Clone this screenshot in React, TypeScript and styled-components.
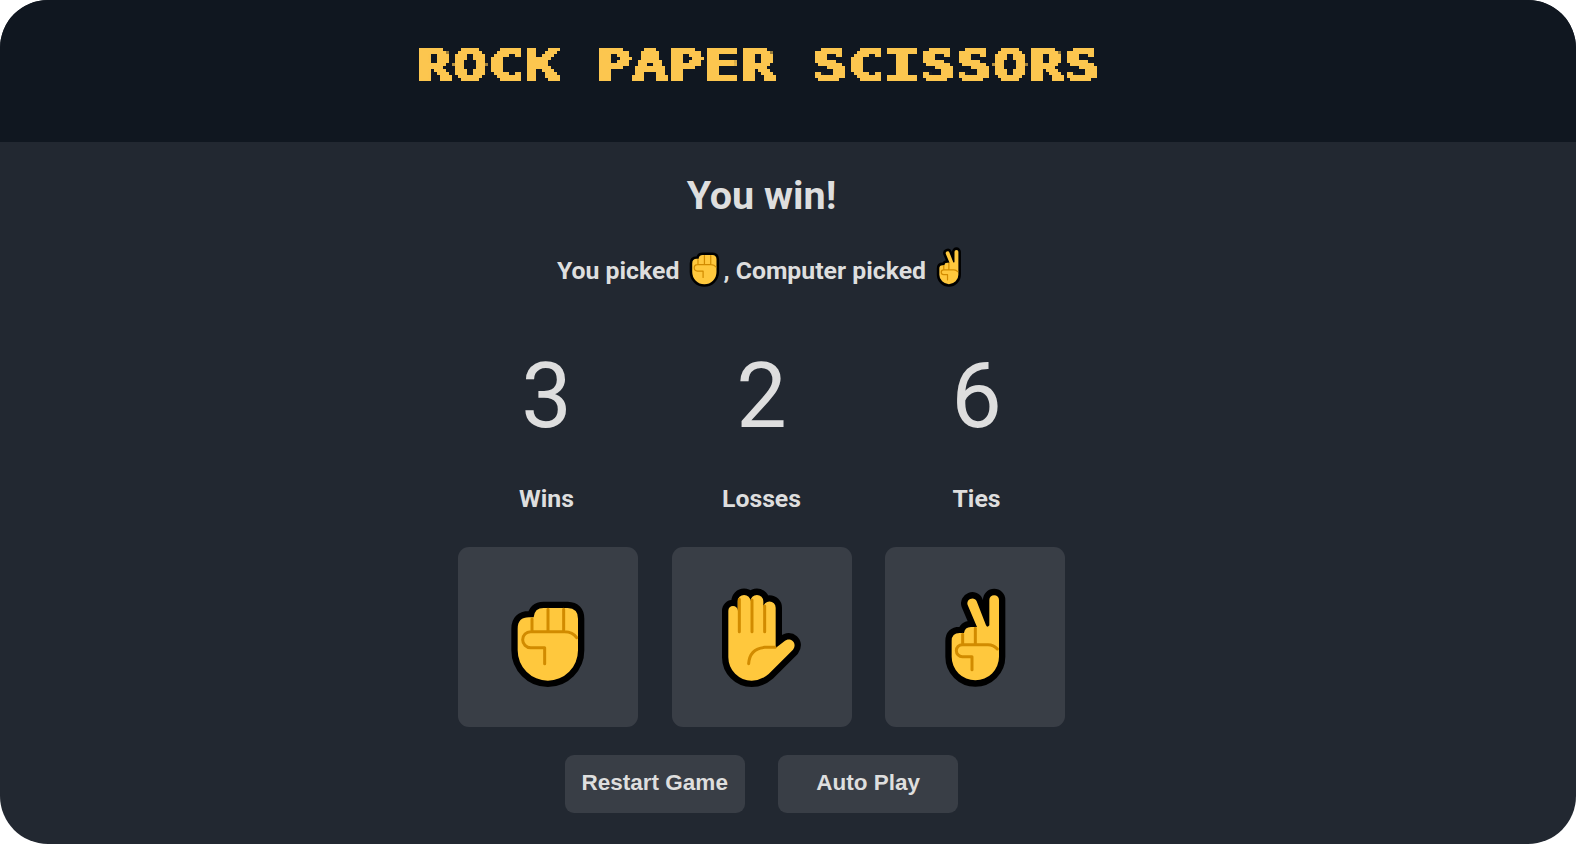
import React, { useState } from "react";
import styled, { createGlobalStyle } from "styled-components";

const GlobalStyle = createGlobalStyle`
  *, *::before, *::after { box-sizing: border-box; }
  body {
    margin: 0;
    background: #fff;
    color: #dedede;
    font-family: Roboto, "Liberation Sans", sans-serif;
  }
`;

const Page = styled.div`
  height: 844px;
  overflow: hidden;
  border-radius: 48px;
  background: #222831;
  display: flex;
  flex-direction: column;
`;

const Header = styled.header`
  height: 142px;
  padding: 33px 60px 0 0;
  background: #101720;
  display: flex;
  justify-content: center;
  align-items: flex-start;
`;

const PixelArea = styled.div`
  width: 720px;
  height: 64px;
  display: flex;
  justify-content: center;
  filter: url(#pixelate);
`;

const Title = styled.h1`
  margin: 0;
  color: #fcc64f;
  font: bold 43px/64px "DejaVu Sans Mono", "Liberation Mono", monospace;
  white-space: pre;
  -webkit-text-stroke: 1.7px #fcc64f;
  transform: scaleX(1.3906);
`;

const FilterDefs = styled.svg`
  position: absolute;
`;

const Main = styled.main`
  padding-right: 53px;
  display: flex;
  flex-direction: column;
  align-items: center;
`;

const Result = styled.h2`
  margin: 30px 0 0;
  font-size: 39.5px;
  line-height: 48px;
`;

const Picks = styled.div`
  margin: 27px 4px 0 0;
  height: 48px;
  font-size: 24.8px;
  line-height: 48px;
  font-weight: 700;
  display: flex;
  white-space: pre;
`;

const Scores = styled.section`
  margin-top: 42px;
  display: flex;
`;

const Score = styled.div`
  width: 215px;
  display: flex;
  flex-direction: column;
  align-items: center;
`;

const Count = styled.div`
  font-size: 90px;
  line-height: 120px;
`;

const Label = styled.div`
  margin-top: 24px;
  font-size: 24.8px;
  line-height: 36px;
  font-weight: 700;
`;

const ButtonRow = styled.div<{ $top: number }>`
  margin-top: ${(p) => p.$top}px;
  display: flex;
  gap: 33.5px;
`;

const BaseButton = styled.button`
  width: 180px;
  padding: 0;
  border: 0;
  background: #393e46;
  color: #dedede;
  cursor: pointer;
`;

const MoveButton = styled(BaseButton)`
  height: 180px;
  border-radius: 11px;
`;

const ActionButton = styled(BaseButton)`
  height: 58px;
  border-radius: 9px;
  padding-bottom: 2px;
  font: bold 22.5px "Liberation Sans", Arial, sans-serif;
`;

const HandSvg = styled.svg`
  display: block;
`;

const InlineHand = styled(HandSvg)<{ $left: number; $right: number }>`
  margin: -2px ${(p) => p.$right}px 0 ${(p) => p.$left}px;
`;

type Move = "rock" | "paper" | "scissors";

const hands: Record<Move, { body: string; lines: string; label: string }> = {
  rock: {
    label: "Rock",
    body: "M203 266Q203 232 237 232H251Q253 204 281 204H353Q384 205 384 236V331A90.5 91 0 0 1 203 331Z",
    lines: "M246 237V272M294 208V272M341 208V272M380 293Q368 275 344 275H242a24 24 0 0 0 0 48H284V371",
  },
  paper: {
    label: "Paper",
    body: "M193 212a14 14 0 0 1 28 0V184a19 19 0 0 1 38.500 0a19 19 0 0 1 38.500 0V203a18.500 18.500 0 0 1 37 0V324L361 304C378 288 402 308 387 329L314 402Q291 422 263 422A70 70 0 0 1 193 352Z",
    lines: "M226 178V275M264 180V275M302 198V275M254 371Q257 326 302 322H333",
  },
  scissors: {
    label: "Scissors",
    body: "M221 303Q221 279 245 279H258Q260 261 279 261H297L269 195C263 177 289 167 296 184L324 256Q328 264 334 256V180a14.500 14.500 0 0 1 29 0V350A71 71 0 0 1 221 350Z",
    lines: "M254 283V311M292 265V311M358 327Q347 314 330 314H253a18 18 0 0 0 0 36H282V389",
  },
};

function HandShape({ move }: { move: Move }) {
  const { body, lines } = hands[move];
  return (
    <g strokeLinejoin="round" strokeLinecap="round">
      <path d={body} fill="#000" stroke="#000" strokeWidth="38" />
      <path d={body} fill="#ffc83d" />
      <path d={lines} fill="none" stroke="#d18b00" strokeWidth="9" />
    </g>
  );
}

const boxes: Record<Move, string> = {
  rock: "24 21 540 540",
  paper: "24 21 540 540",
  scissors: "21 21 540 540",
};

export default function App() {
  const [picks] = useState<{ player: Move; computer: Move }>({ player: "rock", computer: "scissors" });
  const scores = [
    { label: "Wins", count: 3 },
    { label: "Losses", count: 2 },
    { label: "Ties", count: 6 },
  ];
  return (
    <>
      <GlobalStyle />
      {/* Samples one pixel per 3px cell and spreads it over the cell */}
      <FilterDefs width="0" height="0" aria-hidden="true">
        <filter id="pixelate" filterUnits="userSpaceOnUse" x="0" y="0" width="1576" height="142" colorInterpolationFilters="sRGB">
          <feFlood x="1" y="1" width="1" height="1" floodColor="#000" result="dot" />
          <feOffset in="dot" x="0" y="0" width="3" height="3" result="cell" />
          <feTile in="cell" x="0" y="0" width="1576" height="142" result="grid" />
          <feComponentTransfer in="SourceGraphic" result="hard">
            <feFuncA type="linear" slope="12" intercept="-5.5" />
          </feComponentTransfer>
          <feComposite in="hard" in2="grid" operator="in" />
          <feMorphology operator="dilate" radius="1" />
        </filter>
      </FilterDefs>
      <Page>
        <Header>
          <PixelArea>
            <Title>ROCK PAPER SCISSORS</Title>
          </PixelArea>
        </Header>
        <Main>
          <Result>You win!</Result>
          <Picks>
            <span>You picked</span>
            <InlineHand $left={10} $right={3} width="31" height="42" viewBox="179 129 231 313">
              <HandShape move={picks.player} />
            </InlineHand>
            <span>, Computer picked</span>
            <InlineHand $left={10} $right={0} width="26" height="42" viewBox="196 129 194 313">
              <HandShape move={picks.computer} />
            </InlineHand>
          </Picks>
          <Scores>
            {scores.map((s) => (
              <Score key={s.label}>
                <Count>{s.count}</Count>
                <Label>{s.label}</Label>
              </Score>
            ))}
          </Scores>
          <ButtonRow $top={30}>
            {(["rock", "paper", "scissors"] as Move[]).map((m) => (
              <MoveButton key={m} aria-label={hands[m].label}>
                <HandSvg width="180" height="180" viewBox={boxes[m]}>
                  <HandShape move={m} />
                </HandSvg>
              </MoveButton>
            ))}
          </ButtonRow>
          <ButtonRow $top={28}>
            <ActionButton>Restart Game</ActionButton>
            <ActionButton>Auto Play</ActionButton>
          </ButtonRow>
        </Main>
      </Page>
    </>
  );
}
